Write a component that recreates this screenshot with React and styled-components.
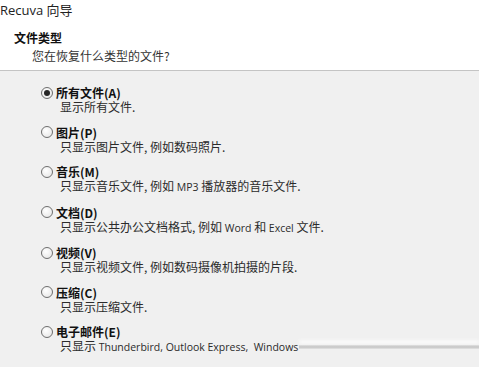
import React from 'react';
import styled, { createGlobalStyle } from 'styled-components';

const GlobalStyle = createGlobalStyle`
  html, body {
    margin: 0;
    padding: 0;
    background: #f0f0f0;
  }
  body {
    width: 479px;
    height: 367px;
    overflow: hidden;
    font-family: "Noto Sans CJK SC", "Noto Sans", sans-serif;
    color: #1e1e1e;
  }
`;

// header area (white)
const Header = styled.header`
  height: 71px;
  background: #ffffff;
  border-bottom: 1px solid #c4c4c4;
  box-sizing: border-box;
`;

const Title = styled.div`
  font-family: "Open Sans", "Noto Sans CJK SC", sans-serif;
  font-size: 13px;
  line-height: 20px;
  color: #222;
`;

const Heading = styled.div`
  font-size: 12px;
  font-weight: bold;
  line-height: 16px;
  margin-top: 10px;
  padding-left: 14px;
  color: #111;
`;

const SubHeading = styled.div`
  font-size: 12px;
  line-height: 16px;
  margin-top: 2px;
  padding-left: 32px;
  color: #333;
`;

// option list
const Body = styled.main`
  padding: 14px 0 0 41px;
  display: flex;
  flex-direction: column;
`;

const Option = styled.div`
  display: flex;
  flex-direction: column;
  margin-bottom: 10px;
`;

const LabelRow = styled.div`
  display: flex;
  align-items: center;
  gap: 3px;
  height: 15px;
`;

const Radio = styled.span`
  width: 12px;
  height: 12px;
  border-radius: 50%;
  border: 1px solid #6e6e6e;
  background: radial-gradient(circle at 40% 35%, #ffffff, #e2e2e2);
  box-sizing: border-box;
  display: flex;
  align-items: center;
  justify-content: center;
  flex: none;

  &::after {
    content: '';
    display: ${p => (p.checked ? 'block' : 'none')};
    width: 6px;
    height: 6px;
    border-radius: 50%;
    background: #262626;
  }
`;

const Label = styled.span`
  font-size: 12px;
  font-weight: bold;
  line-height: 15px;
  color: #111;
`;

const Desc = styled.div`
  display: flex;
  align-items: center;
  font-size: 12px;
  line-height: 14.5px;
  margin-left: 19px;
  color: #2b2b2b;
  white-space: pre;
`;

const Latin = styled.span`
  font-family: "Open Sans", sans-serif;
  font-size: 10.5px;
`;

const Rule = styled.span`
  flex: 1;
  height: 4px;
  margin-left: 1px;
  background: linear-gradient(#e2e2e2, #c4c4c4 50%, #e4e4e4);
  box-shadow: 0 -5px 3px #f9f9f9;
`;

const options = [
  { label: '所有文件(A)', desc: '显示所有文件.', checked: true },
  { label: '图片(P)', desc: '只显示图片文件, 例如数码照片.' },
  {
    label: '音乐(M)',
    desc: (
      <>
        只显示音乐文件, 例如 <Latin>MP3</Latin> 播放器的音乐文件.
      </>
    ),
  },
  {
    label: '文档(D)',
    desc: (
      <>
        只显示公共办公文档格式, 例如 <Latin>Word</Latin> 和 <Latin>Excel</Latin> 文件.
      </>
    ),
  },
  { label: '视频(V)', desc: '只显示视频文件, 例如数码摄像机拍摄的片段.' },
  { label: '压缩(C)', desc: '只显示压缩文件.' },
  {
    label: '电子邮件(E)',
    desc: (
      <>
        只显示 <Latin>Thunderbird, Outlook Express,  Windows</Latin>
      </>
    ),
    rule: true,
  },
];

const App = () => {
  return (
    <>
      <GlobalStyle />
      <Header>
        <Title>Recuva 向导</Title>
        <Heading>文件类型</Heading>
        <SubHeading>您在恢复什么类型的文件?</SubHeading>
      </Header>
      <Body>
        {options.map((o, i) => (
          <Option key={i}>
            <LabelRow>
              <Radio checked={o.checked} />
              <Label>{o.label}</Label>
            </LabelRow>
            <Desc>
              <span>{o.desc}</span>
              {o.rule && <Rule />}
            </Desc>
          </Option>
        ))}
      </Body>
    </>
  );
};

export default App;
